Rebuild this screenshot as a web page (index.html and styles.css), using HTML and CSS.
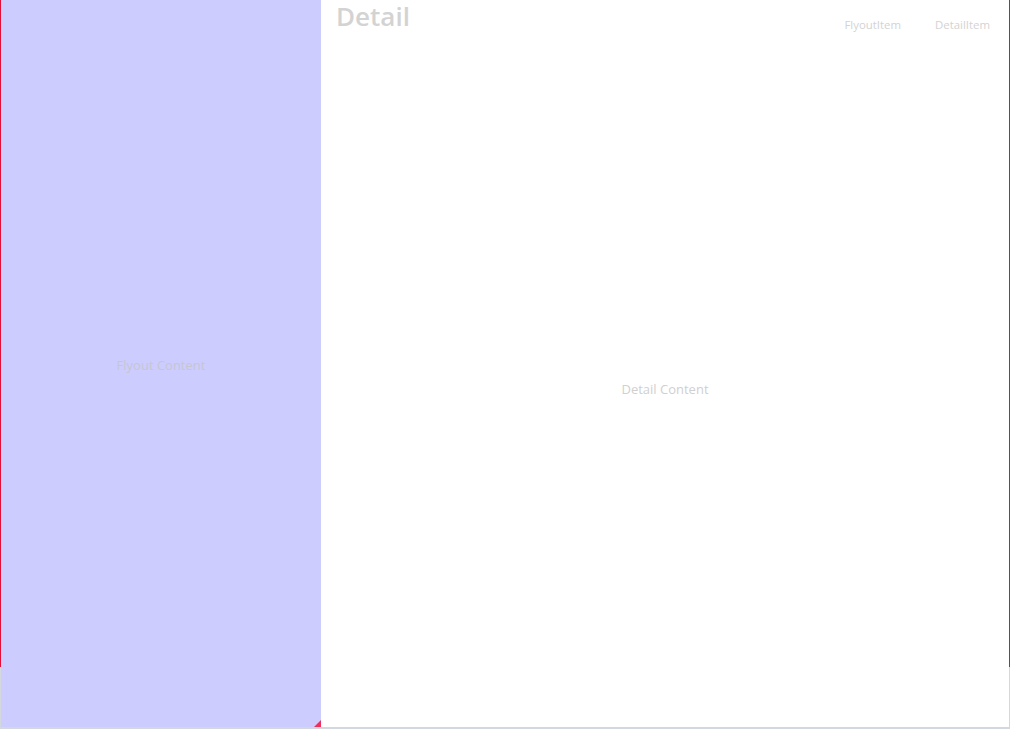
FILE: index.html
```html
<!DOCTYPE html>
<html>
<head>
<meta charset="utf-8">
<link rel="stylesheet" href="styles.css">
</head>
<body>
<div class="window">
  <div class="row">
    <div class="edge"></div>
    <aside class="flyout">
      <span class="flyout-text">Flyout Content</span>
      <span class="corner"></span>
    </aside>
    <main class="detail">
      <header class="header">
        <h1 class="title">Detail</h1>
        <nav class="nav">
          <span class="nav-item">FlyoutItem</span>
          <span class="nav-item">DetailItem</span>
        </nav>
      </header>
      <div class="detail-body">
        <span class="detail-text">Detail Content</span>
      </div>
    </main>
    <div class="edge"></div>
  </div>
  <div class="bottom"></div>
</div>
</body>
</html>
```
FILE: styles.css
```css
html, body {
  margin: 0;
  padding: 0;
  background: #ffffff;
}
body {
  font-family: "Open Sans", "Noto Sans", sans-serif;
  width: 1010px;
  height: 729px;
  overflow: hidden;
}
.window {
  display: flex;
  flex-direction: column;
  width: 1010px;
  height: 729px;
}
.row {
  display: flex;
  height: 727px;
}
.edge {
  width: 1px;
  flex: none;
  background: linear-gradient(to bottom, #e0103a 0, #e0103a 667px, #d3d8de 667px, #d3d8de 100%);
}
.flyout {
  position: relative;
  width: 320px;
  flex: none;
  background: #ccccff;
  display: flex;
  align-items: center;
  justify-content: center;
}
.flyout-text {
  font-size: 13px;
  color: #c6c6d2;
  margin-top: 2px;
}
.corner {
  position: absolute;
  right: 0;
  bottom: 0;
  width: 0;
  height: 0;
  border-left: 7px solid transparent;
  border-bottom: 7px solid #f0305a;
}
.detail {
  flex: 1;
  display: flex;
  flex-direction: column;
  background: #ffffff;
}
.header {
  display: flex;
  justify-content: space-between;
  align-items: flex-start;
  height: 50px;
  padding: 0 19px 0 15px;
}
.title {
  margin: 0;
  font-size: 26px;
  font-weight: 600;
  color: #d3d3d3;
  line-height: 32px;
}
.nav {
  display: flex;
  gap: 34px;
  padding-top: 16px;
}
.nav-item {
  font-size: 11.4px;
  color: #d3d3d3;
  line-height: 18px;
}
.detail-body {
  flex: 1;
  display: flex;
  align-items: center;
  justify-content: center;
}
.detail-text {
  font-size: 13px;
  color: #d0d0d0;
}
.bottom {
  height: 2px;
  background: #d3d8de;
}
```
